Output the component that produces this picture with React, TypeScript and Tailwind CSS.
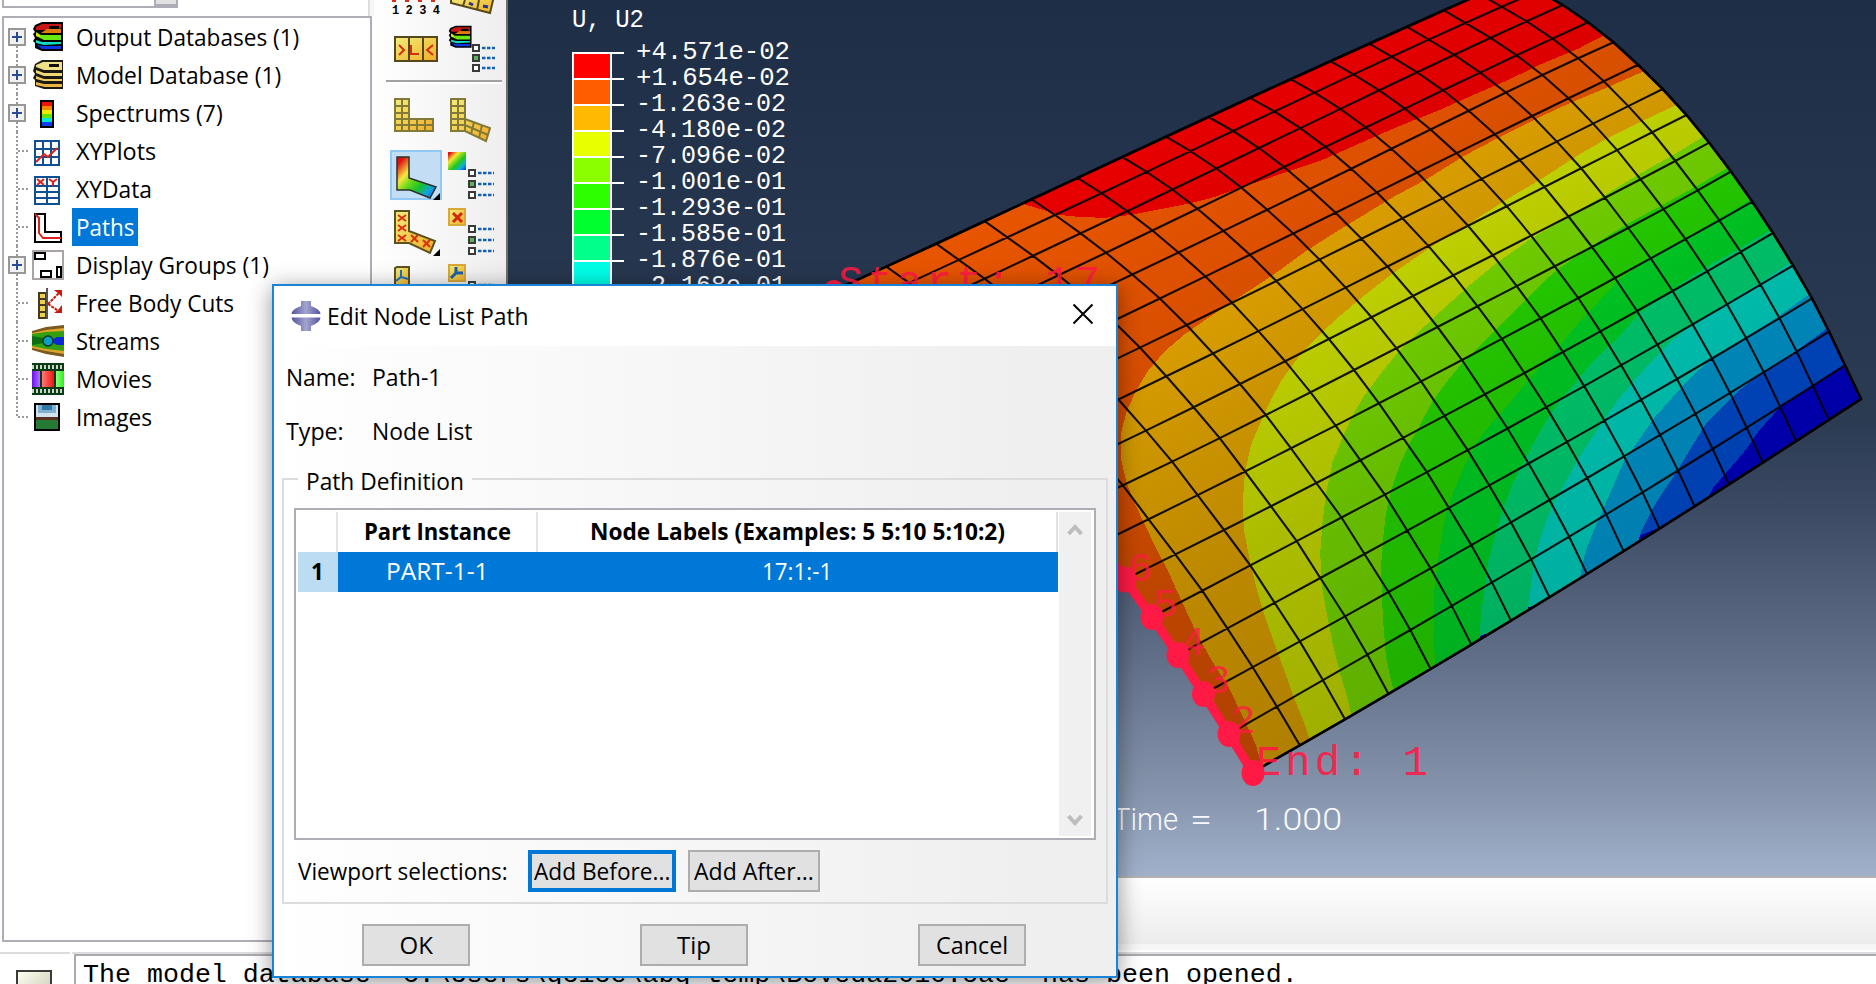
import React, { useLayoutEffect, useRef, useState } from "react";

type Pt = [number, number];

/* Text squeezed or stretched horizontally to an exact advance width. */
function Fit({ w, className = "", children }: { w: number; className?: string; children: string }) {
  const ref = useRef<HTMLSpanElement>(null);
  const [k, setK] = useState(1);
  useLayoutEffect(() => {
    if (ref.current) setK(w / ref.current.offsetWidth);
  }, [w, children]);
  return (
    <span className={"inline-block shrink-0 text-left whitespace-pre " + className} style={{ width: w }}>
      <span ref={ref} className="inline-block origin-left" style={{ transform: `scaleX(${k})` }}>
        {children}
      </span>
    </span>
  );
}

/* ---------- mesh geometry ---------- */

const KEYS = [0, 4, 8, 12, 16];
const COLS: Pt[][] = [
  [[1253, 772], [1229, 734], [1203.5, 694], [1178, 655], [1152, 617], [1124.7, 579.5], [1098, 544], [1072, 509], [1046, 478], [1018.5, 447], [992, 417.5], [965, 391], [937, 367], [910, 345], [885, 325], [859, 306], [835, 290]],
  [[1430.6, 669], [1410.3, 630], [1388.5, 592], [1364.5, 554], [1341.5, 517.5], [1316.3, 483], [1291, 448.3], [1265.8, 415], [1240, 384], [1213, 353.5], [1186.6, 325], [1159.9, 298.5], [1132.3, 274.5], [1106, 252.7], [1080.7, 233.3], [1055, 215], [1031.7, 199.3]],
  [[1587, 574], [1569.2, 536.7], [1549.5, 500], [1528.6, 463.5], [1507.5, 428.5], [1485, 394.3], [1462, 360], [1437.5, 327], [1413, 296], [1387.5, 266.5], [1361.5, 238.7], [1335.6, 212.7], [1309.8, 189], [1284.1, 167], [1259, 148], [1233.1, 131], [1208.5, 117]],
  [[1729, 484.3], [1712.7, 449], [1695.4, 413.8], [1677, 379], [1657.3, 344.6], [1637, 311], [1615, 278], [1592, 247], [1568.5, 216.5], [1544.4, 187], [1519.7, 160], [1494.9, 134.3], [1468.7, 110.7], [1443, 90.3], [1417.2, 72.3], [1391.5, 56.7], [1369.2, 43.7]],
  [[1861, 399], [1845, 365.3], [1829, 331.5], [1812, 298.3], [1793, 265.5], [1773, 233], [1752.3, 201.7], [1731, 171.5], [1709.2, 142.7], [1686.5, 115], [1662.7, 89], [1638, 64.7], [1613.5, 42.3], [1588, 22.3], [1562.7, 5], [1538, -9], [1515, -21]],
];

function node(i: number, j: number): Pt {
  let x = 0;
  let y = 0;
  KEYS.forEach((ka, a) => {
    let w = 1;
    KEYS.forEach((kb) => {
      if (kb !== ka) w *= (i - kb) / (ka - kb);
    });
    x += w * COLS[a][j][0];
    y += w * COLS[a][j][1];
  });
  return [x, y];
}

const R17 = Array.from({ length: 17 }, (_, n) => n);
const d = (pts: Pt[]) => "M" + pts.map((p) => p[0].toFixed(1) + " " + p[1].toFixed(1)).join("L");
const OUTLINE = d([
  ...R17.map((i) => node(i, 0)),
  ...R17.map((j) => node(16, j)),
  ...R17.map((i) => node(16 - i, 16)),
  ...R17.map((j) => node(0, 16 - j)),
]) + "Z";
const GRID = R17.map((j) => d(R17.map((i) => node(i, j)))).join("") + R17.map((i) => d(R17.map((j) => node(i, j)))).join("");

/* Contour boundaries, from the right edge of the shell round to its lower edge. */
const BANDS: { fill: string; line: Pt[] }[] = [
  { fill: "#005dff", line: [[1860, 352], [1845, 364], [1812.7, 385], [1780, 407], [1758, 432], [1745.8, 450], [1726, 473], [1713.7, 487], [1700, 512]] },
  { fill: "#00b9ff", line: [[1845, 316], [1827.5, 328], [1795.3, 351.7], [1763, 372], [1736, 393], [1713.7, 416], [1706, 424], [1691.4, 447], [1676.6, 472], [1661.7, 494], [1651.8, 510], [1641.9, 530], [1632, 560]] },
  { fill: "#00ffe8", line: [[1830, 279], [1811, 293], [1778, 316.7], [1745.8, 336.7], [1711.2, 359], [1690, 378], [1672, 398], [1654, 418], [1637, 443], [1624.6, 460], [1614.7, 483], [1604.8, 505], [1594.9, 528], [1587.5, 546], [1582.5, 563], [1578, 590]] },
  { fill: "#00ff8b", line: [[1810, 247], [1791.9, 261.7], [1763, 281], [1726, 303], [1691.4, 325], [1670, 342], [1654.3, 359], [1634.5, 380], [1617, 401], [1602, 423], [1587.5, 444], [1575, 465], [1565, 483], [1552.8, 505], [1543, 530], [1535.5, 555], [1531.5, 580], [1527, 620]] },
  { fill: "#00ff2e", line: [[1790, 216], [1770.6, 230], [1743.4, 246], [1706.2, 267], [1671.6, 290], [1639.4, 313], [1619.7, 336], [1595, 359], [1575, 383], [1555, 407], [1543, 426], [1525.6, 458], [1513, 483], [1503.3, 508], [1495.9, 533], [1488.5, 560], [1485, 587], [1481, 613], [1479, 650]] },
  { fill: "#2eff00", line: [[1770, 186], [1752.3, 199], [1718.6, 218], [1686.5, 238], [1649.3, 259], [1619.7, 279], [1598, 302], [1577, 325], [1557, 349], [1536, 371], [1516, 395], [1503, 411], [1491, 424], [1476, 444], [1463.8, 467], [1453.9, 491], [1446.4, 513], [1441.5, 537], [1437, 567], [1434, 593], [1434, 643], [1436, 680]] },
  { fill: "#8bff00", line: [[1748, 154], [1729.5, 166.7], [1698.8, 185], [1664.2, 204], [1627, 224], [1590, 247], [1555.3, 271], [1528, 297], [1505.8, 320], [1483.5, 342], [1463, 362], [1446.4, 382], [1432, 402], [1420, 425], [1410, 443], [1401, 462], [1392, 487], [1386, 513], [1383, 540], [1381, 567], [1382, 600], [1383.6, 627], [1386, 657], [1391, 680], [1398, 710]] },
  { fill: "#e8ff00", line: [[1725, 119], [1704.8, 135.7], [1676.6, 153], [1639.4, 174], [1604.8, 195], [1567.7, 217], [1530.6, 239], [1498, 262], [1471, 284], [1446.4, 306], [1421.7, 329], [1400, 350], [1382, 372], [1364, 396], [1354, 413], [1345, 432], [1332.6, 462], [1326.7, 490], [1322.7, 520], [1320.2, 553], [1322, 587], [1326.7, 613], [1332.6, 643], [1340, 673], [1347, 697], [1356, 735]] },
  { fill: "#ffb900", line: [[1692, 94], [1676.6, 105], [1644.4, 120], [1609.8, 137], [1580, 154], [1543, 178], [1505.8, 200], [1468.7, 224], [1426.6, 250], [1392, 274], [1362.3, 297], [1337.5, 318], [1316, 338], [1297, 359], [1281, 381], [1270, 402], [1262, 419], [1251, 445], [1245, 472], [1242.5, 505], [1244.5, 533], [1250, 562], [1257, 590], [1264.8, 616], [1275.7, 647], [1285.6, 674], [1295.5, 702], [1304, 722], [1316, 760]] },
  { fill: "#ff5d00", line: [[1662, 60], [1644.4, 71], [1606, 88], [1570, 103], [1535.5, 119], [1496, 139], [1464, 156], [1427, 179], [1397, 195], [1367, 213], [1337.5, 231], [1306, 251], [1273, 275], [1233.6, 301], [1208, 318], [1185, 334], [1164, 352], [1148, 371], [1137, 389], [1127, 410], [1121, 433], [1120.5, 457], [1127, 484], [1134.6, 503], [1144.5, 524], [1156, 548], [1169, 573], [1182, 602], [1197, 634], [1212, 661], [1229, 688], [1243.5, 718], [1256, 745], [1268, 790]] },
];
const RED: Pt[] = [[1625, 22], [1603.3, 35.7], [1579, 48.3], [1543, 63.3], [1505.8, 81], [1468.7, 97], [1438, 110.7], [1399.4, 126], [1367.3, 140], [1320, 161], [1285, 172.5], [1243.3, 187], [1213.3, 197.3], [1186.7, 204], [1153.3, 210.5], [1130, 215], [1106.7, 217.7], [1083.3, 217.3], [1060, 215], [1040, 209], [1010, 200]];

const PATH_NODES: Pt[] = [[1124.7, 579.5], [1152, 617], [1178, 655], [1203.5, 694], [1229, 734], [1253, 773]];

function Shell() {
  return (
    <svg className="absolute inset-0" width="1368" height="876" viewBox="508 0 1368 876">
      <defs>
        <clipPath id="shell"><path d={OUTLINE} /></clipPath>
        <linearGradient id="shade" gradientUnits="userSpaceOnUse" x1="366" y1="596" x2="687" y2="1119">
          <stop offset="0" stopColor="#000" stopOpacity="0.09" />
          <stop offset="0.28" stopColor="#000" stopOpacity="0.14" />
          <stop offset="0.5" stopColor="#000" stopOpacity="0.21" />
          <stop offset="0.7" stopColor="#000" stopOpacity="0.265" />
          <stop offset="1" stopColor="#000" stopOpacity="0.31" />
        </linearGradient>
      </defs>
      <g clipPath="url(#shell)">
        <rect x="508" width="1368" height="876" fill="#0000f4" />
        {BANDS.map((b) => (
          <path key={b.fill} d={d(b.line) + "L700 900L700 -100L1900 -100Z"} fill={b.fill} shapeRendering="crispEdges" />
        ))}
        <path d={d(RED) + "L900 -100L1700 -100Z"} fill="#ff0000" shapeRendering="crispEdges" />
        <rect x="508" width="1368" height="876" fill="url(#shade)" />
      </g>
      <path d={GRID} fill="none" stroke="#000" strokeOpacity="0.9" strokeWidth="2.1" />
      <path d={OUTLINE} fill="none" stroke="#000" strokeWidth="2.6" />
      <path d={d(PATH_NODES)} fill="none" stroke="#ff1a45" strokeWidth="9" />
      <path d="M1124.7 579.5L1108 555" stroke="#ff1a45" strokeWidth="9" />
      {PATH_NODES.map(([x, y]) => (
        <ellipse key={x} cx={x} cy={y} rx="11.5" ry="13" fill="#ff1a45" />
      ))}
      <ellipse cx="834" cy="292" rx="11" ry="12" fill="#ff1a45" />
      <g fill="#ff1a45" fontFamily="'Liberation Mono', monospace" fontSize="42">
        <g fillOpacity="0.9">
          <text x="838" y="295" textLength="262" lengthAdjust="spacing">Start: 17</text>
          <text x="1256" y="775" textLength="172" lengthAdjust="spacing">End: 1</text>
        </g>
        <g fillOpacity="0.75" fontSize="41">
          <text x="1231" y="733">2</text>
          <text x="1206" y="693">3</text>
          <text x="1181" y="655">4</text>
          <text x="1153" y="617">5</text>
          <text x="1128" y="581">6</text>
        </g>
      </g>
      <g fill="#f7f9fc" fontFamily="Roboto, 'Liberation Sans', sans-serif" fontWeight="300" fontSize="32">
        <text x="1113" y="830" textLength="65" lengthAdjust="spacingAndGlyphs">Time</text>
        <text x="1190" y="830" textLength="22" lengthAdjust="spacingAndGlyphs">=</text>
        <text x="1254" y="830" textLength="88" lengthAdjust="spacingAndGlyphs">1.000</text>
      </g>
    </svg>
  );
}

/* ---------- colour legend ---------- */

const LEGEND: [string, string][] = [
  ["+4.571e-02", "bg-[#ff0000]"],
  ["+1.654e-02", "bg-[#ff5d00]"],
  ["-1.263e-02", "bg-[#ffb900]"],
  ["-4.180e-02", "bg-[#e8ff00]"],
  ["-7.096e-02", "bg-[#8bff00]"],
  ["-1.001e-01", "bg-[#2eff00]"],
  ["-1.293e-01", "bg-[#00ff2e]"],
  ["-1.585e-01", "bg-[#00ff8b]"],
  ["-1.876e-01", "bg-[#00ffe8]"],
  ["-2.168e-01", "bg-[#00b9ff]"],
];

function Legend() {
  return (
    <div className="relative flex flex-col pt-1 pl-16 font-['Liberation_Mono'] text-[26px] text-white">
      <div className="flex h-12 items-start leading-[32px]">
        <Fit w={72}>U, U2</Fit>
      </div>
      {LEGEND.map(([label, color], n) => (
        <div key={label} className="flex h-[26px]">
          <div className={"h-[26px] w-10 border-x-2 border-t-2 border-white " + color} />
          <div className="h-0.5 w-3 bg-white" />
          <div className="-mt-[13px] ml-3 h-[26px] leading-[26px]">
            <Fit w={n < 2 ? 154 : 150}>{label}</Fit>
          </div>
        </div>
      ))}
    </div>
  );
}

/* ---------- icons ---------- */

const ICON = "h-8 w-8 shrink-0";

function OdbArt() {
  return (
    <g>
      <path d="M10 1H31V30H10L3 27V22L1 20L3 17L1 13L3 11L1 8L3 4Z" fill="#000" />
      <path d="M10 3H29V7L25 9H4V6Z" fill="#c91616" />
      <path d="M15 8H29V12H9Z" fill="#e07b0c" />
      <path d="M4 11L9 14H29V19H12L4 15Z" fill="#6be80f" />
      <path d="M4 12L8 14V16L4 15Z" fill="#f0e010" />
      <path d="M4 19L10 21H29V23L12 24L4 22Z" fill="#11dcc0" />
      <path d="M5 24L12 25H29V28H10Z" fill="#0c36e8" />
      <rect x="17" y="5" width="10" height="3" fill="#000" />
    </g>
  );
}
const OdbIcon = () => <svg className={ICON} viewBox="0 0 32 32"><OdbArt /></svg>;
const MdbIcon = () => (
  <svg className={ICON} viewBox="0 0 32 32">
    <path d="M10 1H31V30H12L3 27V21L1 19L3 15L1 12L3 5Z" fill="#1c1a10" />
    <path d="M11 3H30V11H12L4 8V6Z" fill="#efe08a" />
    <path d="M4 11L12 14H30V17H12L4 14Z" fill="#f0d878" />
    <path d="M4 17L12 20H30V22H12L4 20Z" fill="#eecb60" />
    <path d="M4 23L12 25H30V28H13L4 26Z" fill="#eab545" />
    <rect x="17" y="5" width="10" height="3" fill="#111" />
  </svg>
);
const SpectrumIcon = () => (
  <svg className={ICON} viewBox="0 0 32 32" shapeRendering="crispEdges">
    <rect x="8" y="3" width="14" height="28" fill="#000" />
    {["#f51000", "#f58a00", "#f0ea00", "#5fe800", "#00e8d8", "#0a3cf0"].map((c, n) => (
      <rect key={c} x="10" y={5 + n * 4} width="10" height="4" fill={c} />
    ))}
  </svg>
);
const PlotsIcon = () => (
  <svg className={ICON} viewBox="0 0 32 32" fill="none" strokeWidth="2">
    <path d="M3 6H27V30H3ZM11 6V30M19 6V30M3 14H27M3 22H27" stroke="#0f4f92" fill="#fff" />
    <path d="M4 27L12 19L16 22L25 13" stroke="#e0201c" />
  </svg>
);
const DataIcon = () => (
  <svg className={ICON} viewBox="0 0 32 32" fill="none" strokeWidth="2">
    <path d="M3 4H27V31H3ZM15 4V31M3 13H27M3 19H27M3 25H27" stroke="#0f4f92" fill="#fff" />
    <path d="M5 6L12 12M12 6L5 12M17 6L21 9L25 6M21 9V13" stroke="#e0201c" />
  </svg>
);
const PathsIcon = () => (
  <svg className={ICON} viewBox="0 0 32 32" fill="none" strokeWidth="2">
    <path d="M3 3H13V21H29V31H3Z" stroke="#000" fill="#fff" />
    <path d="M3 3L7 7V22L11 27H29" stroke="#e0201c" />
  </svg>
);
const GroupsIcon = () => (
  <svg className={ICON} viewBox="0 0 32 32" fill="none" strokeWidth="2">
    <path d="M1 2H31V30H1Z" stroke="#a9a5a5" fill="#fff" />
    <path d="M3 4H13V10H3ZM9 22H19V28H9ZM25 18H29V28H25Z" stroke="#000" />
  </svg>
);
const CutsIcon = () => (
  <svg className={ICON} viewBox="0 0 32 32" fill="none" strokeWidth="2">
    <path d="M7 6H14V31H7Z" stroke="#403a20" fill="#f0d04c" />
    <path d="M7 12H14M7 18H14M7 25H14" stroke="#403a20" />
    <path d="M15 1V32" stroke="#555" />
    <path d="M16 17L28 5M16 17L28 25" stroke="#c8190c" strokeDasharray="3 1" />
    <path d="M22 3H30V10L27 7ZM30 18V26H22L26 23Z" fill="#c8190c" />
  </svg>
);
const StreamsIcon = () => (
  <svg className={ICON} viewBox="0 0 32 32">
    <path d="M0 6L14 2L32 0V32L14 29L0 25Z" fill="#7a5a20" />
    <path d="M0 8L14 5L32 3V29L14 26L0 23Z" fill="#dfa428" />
    <path d="M0 9L14 7L32 6V26L14 24L0 21Z" fill="#32a010" />
    <path d="M0 11L12 13V18L0 20Z" fill="#0c6e10" />
    <path d="M18 16L25 12H32V20H25Z" fill="#0c28d8" />
    <circle cx="16" cy="16" r="5" fill="#0ba0c8" stroke="#0a3430" strokeWidth="1.5" />
  </svg>
);
const MoviesIcon = () => (
  <svg className={ICON} viewBox="0 0 32 32">
    <defs>
      <linearGradient id="frameA"><stop stopColor="#6a10f0" /><stop offset="1" stopColor="#b070ff" /></linearGradient>
      <linearGradient id="frameB"><stop stopColor="#ff7a78" /><stop offset="1" stopColor="#f01410" /></linearGradient>
      <linearGradient id="frameC"><stop stopColor="#90ff80" /><stop offset="1" stopColor="#28f018" /></linearGradient>
    </defs>
    <rect width="32" height="32" fill="#0b3a16" />
    <path d="M0 4H32M0 28H32" stroke="#c8d8c8" strokeWidth="4" strokeDasharray="2 2" />
    <rect y="8" width="8" height="16" fill="url(#frameA)" />
    <rect x="10" y="8" width="12" height="16" fill="url(#frameB)" />
    <rect x="24" y="8" width="8" height="16" fill="url(#frameC)" />
  </svg>
);
const ImagesIcon = () => (
  <svg className={ICON} viewBox="0 0 32 32">
    <rect x="3" y="3" width="24" height="26" fill="#cfe2ee" stroke="#000" strokeWidth="2" />
    <rect x="6" y="4" width="18" height="8" fill="#7fb0d2" />
    <rect x="10" y="4" width="10" height="5" fill="#2f78a8" />
    <rect x="4" y="16" width="22" height="3" fill="#5a3020" />
    <rect x="4" y="19" width="22" height="9" fill="#257a35" />
  </svg>
);

/* ---------- model tree ---------- */

type Row = { label: string; w: number; icon: () => React.JSX.Element; plus?: boolean; on?: boolean };
const ROWS: Row[] = [
  { label: "Output Databases (1)", w: 223, icon: OdbIcon, plus: true },
  { label: "Model Database (1)", w: 205, icon: MdbIcon, plus: true },
  { label: "Spectrums (7)", w: 147, icon: SpectrumIcon, plus: true },
  { label: "XYPlots", w: 80, icon: PlotsIcon },
  { label: "XYData", w: 76, icon: DataIcon },
  { label: "Paths", w: 58, icon: PathsIcon, on: true },
  { label: "Display Groups (1)", w: 193, icon: GroupsIcon, plus: true },
  { label: "Free Body Cuts", w: 158, icon: CutsIcon },
  { label: "Streams", w: 84, icon: StreamsIcon },
  { label: "Movies", w: 76, icon: MoviesIcon },
  { label: "Images", w: 76, icon: ImagesIcon },
];

function TreeGuide({ first, last, plus }: { first: boolean; last: boolean; plus?: boolean }) {
  return (
    <svg className="h-[38px] w-7 shrink-0" viewBox="4 0 28 38">
      <path d={`M17 ${first ? 20 : 0}V${last ? 20 : 38}`} stroke="#9a9a9a" strokeWidth="2" strokeDasharray="2 2" />
      {plus ? (
        <g>
          <rect x="9" y="11" width="16" height="16" fill="#f1f1f1" stroke="#979797" strokeWidth="2" />
          <path d="M12 19H22M17 14V24" stroke="#2b4a97" strokeWidth="2" />
        </g>
      ) : (
        <path d="M18 19H28" stroke="#9a9a9a" strokeWidth="2" strokeDasharray="2 2" />
      )}
    </svg>
  );
}

function Tree() {
  return (
    <div className="flex w-[374px] shrink-0 flex-col bg-white">
      <div className="flex h-4 items-start justify-between pl-0.5">
        <div className="flex h-2 w-44 justify-end border-b-2 border-l-2 border-[#adadb5]">
          <div className="h-1.5 w-6 border-x-2 border-b-2 border-[#adadb5] bg-[#e1e1e1]" />
        </div>
        <div className="h-4 w-1.5 border-l-2 border-[#dedede] bg-[#f6f6f6]" />
      </div>
      <div className="ml-0.5 flex h-[926px] w-[370px] flex-col border-2 border-[#adadb5] bg-white">
        {ROWS.map((r, n) => (
          <div key={r.label} className="flex h-[38px] items-center">
            <TreeGuide first={n === 0} last={n === ROWS.length - 1} plus={r.plus} />
            <r.icon />
            <div className={"ml-2 flex h-[38px] items-center pr-1 pl-1 leading-none " + (r.on ? "bg-[#0078d7] text-white" : "text-black")}>
              <Fit w={r.w}>{r.label}</Fit>
            </div>
          </div>
        ))}
      </div>
    </div>
  );
}

/* ---------- toolbox ---------- */

function OptionList({ x, y, pitch = 11, dash = 16 }: { x: number; y: number; pitch?: number; dash?: number }) {
  return (
    <g transform={`translate(${x} ${y})`}>
      {[0, 1, 2].map((n) => (
        <g key={n} transform={`translate(0 ${n * pitch})`}>
          <rect x="1" y="1" width="6" height="6" fill={n === 1 ? "#5fb15f" : "#fff"} stroke="#3a3a3a" strokeWidth="2" />
          <path d={`M10 4H${10 + dash}`} stroke="#1262b8" strokeWidth="2.4" strokeDasharray="3.5 1.500" />
        </g>
      ))}
    </g>
  );
}

function Toolbox() {
  return (
    <div className="flex h-[950px] w-[134px] shrink-0 bg-linear-to-r from-white to-[#eeeeee]">
      <svg width="132" height="290" viewBox="374 0 132 290" fill="none">
        <defs>
          <linearGradient id="rainbow" x1="0" y1="0" x2="1" y2="1">
            <stop offset="0.08" stopColor="#e01010" />
            <stop offset="0.3" stopColor="#f2e832" />
            <stop offset="0.58" stopColor="#22c818" />
            <stop offset="0.8" stopColor="#10b0d8" />
            <stop offset="1" stopColor="#0c30e0" />
          </linearGradient>
          <linearGradient id="bend" gradientUnits="userSpaceOnUse" x1="398" y1="160" x2="438" y2="196">
            <stop offset="0.05" stopColor="#e01010" />
            <stop offset="0.28" stopColor="#f4e840" />
            <stop offset="0.46" stopColor="#60d818" />
            <stop offset="0.64" stopColor="#18c030" />
            <stop offset="0.82" stopColor="#10a0e8" />
            <stop offset="1" stopColor="#0c40d8" />
          </linearGradient>
          <linearGradient id="gold" x1="0" y1="0" x2="1" y2="1">
            <stop offset="0" stopColor="#f0ee7c" />
            <stop offset="1" stopColor="#f4ac22" />
          </linearGradient>
        </defs>
        <path d="M392 1H396M405 1H409M418 1H422M431 1H435" stroke="#d83018" strokeWidth="2" />
        <text x="392" y="14" fill="#000" fontFamily="'Liberation Mono', monospace" fontWeight="bold" fontSize="12" textLength="48">1234</text>
        <path d="M451 -4H494L490 13L451 3Z" fill="url(#gold)" stroke="#54481c" strokeWidth="2" />
        <path d="M465 0L463 6M479 0L477 10" stroke="#54481c" strokeWidth="2" />
        <path d="M469 3L473 5M483 6L488 7" stroke="#2a3290" strokeWidth="3" />

        <rect x="395" y="37" width="42" height="24" fill="url(#gold)" stroke="#54481c" strokeWidth="2" />
        <path d="M409 37V61M423 37V61" stroke="#54481c" strokeWidth="2" />
        <path d="M399 45L404 50L399 55M411 45V54H419M433 45L427 50L433 55" stroke="#d03010" strokeWidth="2" />
        <g transform="translate(448 25) scale(0.76)"><OdbArt /></g>
        <OptionList x={472} y={44} pitch={10} dash={13} />

        <path d="M386 81H502" stroke="#a2a2a2" strokeWidth="2" />
        <path d="M386 83H502" stroke="#fff" strokeWidth="2" />

        <g stroke="#847a38" strokeWidth="2">
          <path d="M395 99H409V119H433V131H395Z" fill="url(#gold)" />
          <path d="M402 99V131M395 106H409M395 113H409M395 119H409M395 125H433M409 119V131M417 119V131M425 119V131" />
          <path d="M451 99H465V119L490 128L486 141L465 131H451Z" fill="url(#gold)" />
          <path d="M458 99V131M451 106H465M451 113H465M451 119H465M451 125H465L488 135M465 119V131M474 122L471 134M482 125L479 138" />
        </g>

        <rect x="391" y="151" width="50" height="48" fill="#c3ddf4" stroke="#90c8f6" strokeWidth="2" />
        <path d="M397 157H409V178L436 187L430 198L410 190H397Z" fill="url(#bend)" stroke="#30302c" strokeWidth="1.5" />
        <path d="M440 193V200H433Z" fill="#000" />
        <rect x="448" y="152" width="18" height="18" fill="url(#rainbow)" />
        <OptionList x={468} y={169} />

        <path d="M395 211H409V231L435 241L430 253L409 243H395Z" fill="url(#gold)" stroke="#5c5220" strokeWidth="2" />
        <path d="M398 215L406 221M406 215L398 221M398 225L406 231M406 225L398 231M398 235L406 241M406 235L398 241M411 235L418 242M418 235L411 242M423 240L430 247M430 240L423 247" stroke="#d83010" strokeWidth="2" />
        <path d="M440 249V256H433Z" fill="#000" />
        <rect x="449" y="209" width="16" height="16" fill="url(#gold)" stroke="#d8a83c" strokeWidth="2" />
        <path d="M453 213L462 222M462 213L453 222" stroke="#d02810" strokeWidth="3" />
        <OptionList x={468} y={225} />

        <path d="M395 290V268L397 267H409V290" fill="url(#gold)" stroke="#5c5220" strokeWidth="2" />
        <path d="M401 270V277L396 281M401 277L408 279" stroke="#1a70c0" strokeWidth="2" />
        <rect x="449" y="265" width="16" height="16" fill="url(#gold)" stroke="#d8a83c" strokeWidth="2" />
        <path d="M456 267V273L451 278M456 273H463" stroke="#1a60a8" strokeWidth="3" />
        <OptionList x={468} y={281} />
      </svg>
      <div className="w-0.5 bg-[#6e6e6e]" />
    </div>
  );
}

/* ---------- dialog ---------- */

function Button({ label, w, box, focus }: { label: string; w: number; box: string; focus?: boolean }) {
  return (
    <button
      className={
        "flex h-[42px] items-center justify-center bg-[#e1e1e1] leading-none " + box + " " +
        (focus ? "border-4 border-[#0078d7]" : "border-2 border-[#adadad]")
      }
    >
      <Fit w={w}>{label}</Fit>
    </button>
  );
}

function Dialog() {
  return (
    <div className="absolute top-[284px] left-[272px] flex h-[694px] w-[846px] flex-col border-2 border-[#1883d7] bg-white shadow-[0_4px_22px_rgba(0,0,0,0.42)]">
      <div className="flex h-[60px] shrink-0 items-center bg-white pr-[22px] pl-[17px]">
        <svg className="h-[30px] w-[30px]" viewBox="0 0 30 30">
          <defs>
            <linearGradient id="orb" x1="0" x2="1">
              <stop offset="0" stopColor="#54549a" />
              <stop offset="0.5" stopColor="#a4a4d0" />
              <stop offset="1" stopColor="#54549a" />
            </linearGradient>
          </defs>
          <path d="M10 0H20V5Q29 8 29.500 13H0.500Q1 8 10 5Z" fill="url(#orb)" />
          <path d="M10 30H20V25Q29 22 29.500 16.500H0.500Q1 22 10 25Z" fill="url(#orb)" />
        </svg>
        <div className="ml-[6px] flex-1 leading-none"><Fit w={202}>Edit Node List Path</Fit></div>
        <svg width="22" height="22" viewBox="0 0 22 22" className="mb-1"><path d="M1.500 1.500L20.500 20.500M20.500 1.500L1.500 20.500" stroke="#000" strokeWidth="2" /></svg>
      </div>
      <div className="flex flex-1 flex-col bg-linear-to-r from-white to-[#efefef] to-90% pr-2 pl-2">
        <div className="mt-[11px] flex h-10 items-center pl-1 leading-none">
          <div className="w-[86px]"><Fit w={69}>Name:</Fit></div>
          <Fit w={70}>Path-1</Fit>
        </div>
        <div className="mt-[14px] flex h-10 items-center pl-1 leading-none">
          <div className="w-[86px]"><Fit w={58}>Type:</Fit></div>
          <Fit w={100}>Node List</Fit>
        </div>
        <fieldset className="mt-[15px] flex h-[438px] flex-col">
          <div className="flex h-7 shrink-0 items-center leading-none">
            <div className="mt-[12px] h-4 w-4 self-start border-t-2 border-l-2 border-[#dcdcdc]" />
            <div className="px-2 pt-0.5"><Fit w={158}>Path Definition</Fit></div>
            <div className="mt-[12px] h-4 flex-1 self-start border-t-2 border-r-2 border-[#dcdcdc]" />
          </div>
          <div className="flex h-[410px] shrink-0 flex-col border-x-2 border-b-2 border-[#dcdcdc] px-[10px] pt-[14px]">
            <div className="flex h-[332px] shrink-0 justify-between border-2 border-[#adadb5] bg-white p-0.5">
              <div className="flex w-[760px] flex-col leading-none">
                <div className="flex h-10 items-stretch font-bold">
                  <div className="w-10 border-r-2 border-[#e2e2e2]" />
                  <div className="flex w-[200px] items-center justify-center border-r-2 border-[#e2e2e2] pb-0.5"><Fit w={147}>Part Instance</Fit></div>
                  <div className="flex flex-1 items-center justify-center border-r-2 border-[#e2e2e2] pb-0.5"><Fit w={415}>Node Labels (Examples: 5 5:10 5:10:2)</Fit></div>
                </div>
                <div className="flex h-10 items-stretch bg-[#0078d7] text-white">
                  <div className="flex w-10 items-center justify-center bg-[#bcdcf4] pr-0.5 pb-0.5 font-bold text-black"><Fit w={13}>1</Fit></div>
                  <div className="flex w-[200px] items-center justify-center pr-0.5 pb-0.5"><Fit w={103}>PART-1-1</Fit></div>
                  <div className="flex flex-1 items-center justify-center pr-0.5 pb-0.5"><Fit w={70}>17:1:-1</Fit></div>
                </div>
              </div>
              <div className="mr-px flex w-8 flex-col items-center justify-between bg-[#f0f0f0] pt-3 pb-2.5">
                <svg width="16" height="13" viewBox="0 0 16 13"><path d="M1.500 10L8 3L14.500 10" fill="none" stroke="#bdbdbd" strokeWidth="4" /></svg>
                <svg width="16" height="13" viewBox="0 0 16 13"><path d="M1.500 3L8 10L14.500 3" fill="none" stroke="#bdbdbd" strokeWidth="4" /></svg>
              </div>
            </div>
            <div className="mt-[10px] flex h-[42px] items-center pl-1 leading-none">
              <div className="w-[230px]"><Fit w={210}>Viewport selections:</Fit></div>
              <Button label="Add Before..." w={136} box="w-[148px]" focus />
              <Button label="Add After..." w={120} box="ml-3 w-[132px]" />
            </div>
          </div>
        </fieldset>
        <div className="mt-5 flex justify-between pr-[82px] pl-20">
          <Button label="OK" w={33} box="w-[108px]" />
          <Button label="Tip" w={34} box="w-[108px]" />
          <Button label="Cancel" w={72} box="w-[108px]" />
        </div>
      </div>
    </div>
  );
}

export default function App() {
  return (
    <div className="relative h-[984px] w-[1876px] overflow-hidden bg-white font-['Open_Sans',sans-serif] text-[24px] text-black">
      <div className="flex h-[950px]">
        <Tree />
        <Toolbox />
        <div className="flex flex-1 flex-col">
          <div className="relative h-[876px] overflow-hidden bg-[linear-gradient(to_bottom,#1e2e47_0%,#27374f_32%,#2b3b52_48%,#3b4a62_58%,#5e6c85_74%,#8493aa_90%,#a1b1cb_100%)]">
            <Shell />
            <Legend />
          </div>
          <div className="h-0.5 bg-[#b2b2b2]" />
          <div className="h-[66px] bg-linear-to-b from-white to-[#ececec]" />
          <div className="flex-1 bg-[#f6f6f6]" />
        </div>
      </div>
      <div className="flex h-[34px] bg-white pt-0.5">
        <div className="h-8 w-[70px] border-t-2 border-[#dcdcdc] pt-4 pl-4">
          <div className="h-8 w-9 border-2 border-[#3a3a3a] bg-linear-to-br from-[#fffff0] to-[#c8c8b4]" />
        </div>
        <div className="ml-0.5 flex-1 border-t-2 border-[#dcdcdc] pl-0.5">
          <div className="h-8 border-t-2 border-l-2 border-[#a9a9b0] pl-[7px] font-['Liberation_Mono'] text-[26px] leading-[38px]">
            <Fit w={1215}>{'The model database "C:\\Users\\qcice\\abq_temp\\Boveda2010.cae" has been opened.'}</Fit>
          </div>
        </div>
      </div>
      <Dialog />
    </div>
  );
}
